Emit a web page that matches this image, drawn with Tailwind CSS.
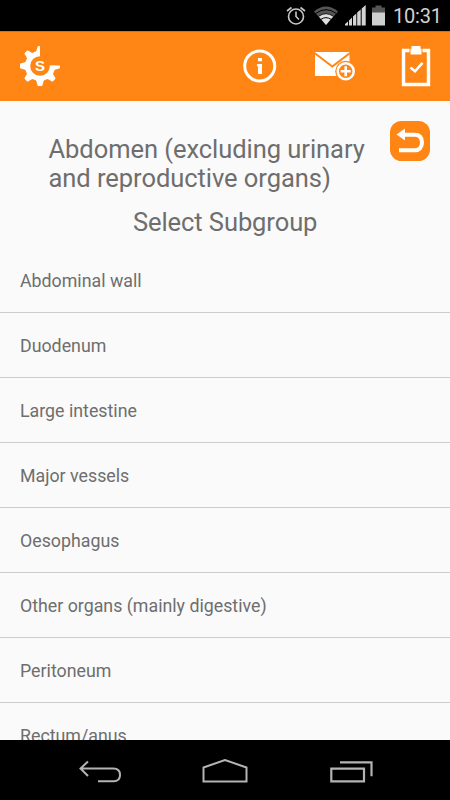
<!DOCTYPE html>
<html lang="en">
<head>
<meta charset="utf-8">
<title>Select Subgroup</title>
<script src="https://cdn.jsdelivr.net/npm/@tailwindcss/browser@4"></script>
</head>
<body class="w-[450px] h-[800px] overflow-hidden flex flex-col bg-[#fafafa] text-[#6e6e6e] font-['Roboto',sans-serif]">
<div class="h-[31px] shrink-0 bg-black flex items-center justify-end pr-[9px] text-[#d2d2d2]">
  <svg class="w-[100px] h-[31px] mr-[8px]" viewBox="285 0 100 31" fill="none">
    <circle cx="296" cy="16.500" r="7.500" stroke="#c8c8c8" stroke-width="1.600"/>
    <path d="M296 11.500V16.500L299 19.500M287 11L291.500 7.500M305 11L300.500 7.500" stroke="#c8c8c8" stroke-width="1.600"/>
    <path d="M314 11.500Q326 1.500 338 11.500L326 25Z" fill="#555"/>
    <path d="M318.500 16Q326 10.500 333.500 16L326 25Z" fill="#e0e0e0"/>
    <path d="M316 13.300Q326 6 336 13.300M318.500 16.300Q326 11 333.500 16.300M321 19.300Q326 16 331 19.300" stroke="#000" stroke-width="1"/>
    <path d="M345 25.500V24L348 21.500V25.500ZM349 25.500V20.500L352 17.500V25.500ZM353 25.500V16.500L356.300 13.500V25.500ZM357.200 25.500V12.500L360.700 9.500V25.500ZM361.700 25.500V8.500L365.700 5V25.500Z" fill="#d4d4d4"/>
    <path d="M372 7.500H375.500V5.500H381.500V7.500H385V13H372Z" fill="#555"/>
    <path d="M372 12.500H385V25.500H372Z" fill="#cfcfcf"/>
  </svg>
  <span class="pt-[2px] text-[20px] leading-[31px] w-[48px] tracking-[-0.200px] whitespace-nowrap">10:31</span>
</div>
<header class="h-[70px] shrink-0 bg-[#ff8614] border-t border-[#d87010] flex items-center justify-between pl-[20px] pr-[19px] pb-px">
  <svg class="w-10 h-[42px]" viewBox="0 0 40 42">
    <defs>
      <clipPath id="cut"><path d="M0 0H20V20.500H40V42H0Z"/></clipPath>
      <path id="tooth" d="M13.500 9Q17 6 17.300 2Q17.400 0.500 18.500 0.500H21.500Q22.600 0.500 22.700 2Q23 6 26.500 9Z"/>
    </defs>
    <g clip-path="url(#cut)" fill="#fff">
      <circle cx="20" cy="21" r="15"/>
      <use href="#tooth" transform="translate(0 .5)"/>
      <use href="#tooth" transform="translate(0 .5) rotate(90 20 20.500)"/>
      <use href="#tooth" transform="translate(0 .5) rotate(135 20 20.500)"/>
      <use href="#tooth" transform="translate(0 .5) rotate(180 20 20.500)"/>
      <use href="#tooth" transform="translate(0 .5) rotate(225 20 20.500)"/>
      <use href="#tooth" transform="translate(0 .5) rotate(270 20 20.500)"/>
      <use href="#tooth" transform="translate(0 .5) rotate(315 20 20.500)"/>
    </g>
    <circle cx="20" cy="21" r="9.800" fill="#ff8614"/>
    <text x="20" y="26.300" text-anchor="middle" font-family="Liberation Sans, sans-serif" font-weight="700" font-size="15" fill="#fff">S</text>
  </svg>
  <svg class="w-[188px] h-[42px]" viewBox="243 45 188 42" fill="none">
    <circle cx="259.700" cy="66" r="15" stroke="#fff" stroke-width="3"/>
    <path d="M258 58H262V61.300H258ZM257 64H262V74H258V66.500H257Z" fill="#fff"/>
    <path d="M315 52H349.500V76H315Z" fill="#fff"/>
    <path d="M314.500 53L332.300 66.500L350 53" stroke="#ff8614" stroke-width="2"/>
    <circle cx="345.700" cy="71.300" r="10.500" fill="#ff8614"/>
    <circle cx="345.700" cy="71.300" r="8" stroke="#fff" stroke-width="2.500"/>
    <path d="M345.700 66.300V76.300M340.700 71.300H350.700" stroke="#fff" stroke-width="2.600"/>
    <path d="M403.500 50.500H428.500V84.500H403.500Z" stroke="#fff" stroke-width="3.400"/>
    <path d="M409.500 48H422.500V54.500H409.500Z" fill="#ff8614"/>
    <path d="M411.500 46H420.500V48.800H421.500V54.500H410.500V48.800H411.500Z" fill="#fff"/>
    <path d="M410.500 67.500L415 71.300L422.500 62.800" stroke="#fff" stroke-width="2.600"/>
  </svg>
</header>
<main class="flex-1 min-h-0 overflow-hidden">
  <div class="h-[147px] pl-[48.500px] pr-5 pt-[20px]">
    <div class="flex justify-between">
      <h1 class="pt-[14px] text-[25.500px] tracking-[-0.050px] leading-[29px] whitespace-nowrap">Abdomen (excluding urinary<br>and reproductive organs)</h1>
      <svg class="w-10 h-10 shrink-0" viewBox="0 0 40 40" fill="none">
        <rect width="40" height="40" rx="11.500" fill="#ff8614"/>
        <path d="M13 13.700H24.500C30 13.700 32 17 32 21.500S29.500 29.300 24.500 29.300H9" stroke="#fff" stroke-width="4"/>
        <path d="M6.500 13.500L15 7.500V19.500Z" fill="#fff"/>
      </svg>
    </div>
    <h2 class="pt-[14px] pl-[84.500px] text-[25.500px] tracking-[-0.080px] leading-[30px] whitespace-nowrap">Select Subgroup</h2>
  </div>
  <ul class="text-[17.800px] [&>li]:h-[65px] [&>li]:flex [&>li]:items-center [&>li]:px-5 [&>li]:pt-[2px] [&>li]:border-b [&>li]:border-[#cdcdcd]">
    <li>Abdominal wall</li>
    <li>Duodenum</li>
    <li>Large intestine</li>
    <li>Major vessels</li>
    <li>Oesophagus</li>
    <li>Other organs (mainly digestive)</li>
    <li>Peritoneum</li>
    <li>Rectum/anus</li>
  </ul>
</main>
<nav class="h-[60px] shrink-0 bg-black flex justify-between items-center pl-[79px] pr-[76px] pt-[3px]">
  <svg class="w-[43px] h-[26px]" viewBox="79 759 43 26" fill="none" stroke="#b4b4b4" stroke-width="2">
    <path d="M80.500 768.500H113.500C118 768.500 120 771.500 120 775S118 781.300 113.500 781.300H98M88 761.500L80.500 768.500L88 776"/>
  </svg>
  <svg class="w-[48px] h-[26px]" viewBox="202 759 48 26" fill="none" stroke="#b4b4b4" stroke-width="2">
    <path d="M203.500 781.500V767.500L225 760L246.500 767.500V781.500Z"/>
  </svg>
  <svg class="w-[45px] h-[26px]" viewBox="329 759 45 26" fill="none" stroke="#b4b4b4" stroke-width="2.200">
    <path d="M331.300 768.700H364V781.300H331.300ZM340 762.300H371.500V776.300"/>
  </svg>
</nav>
</body>
</html>
